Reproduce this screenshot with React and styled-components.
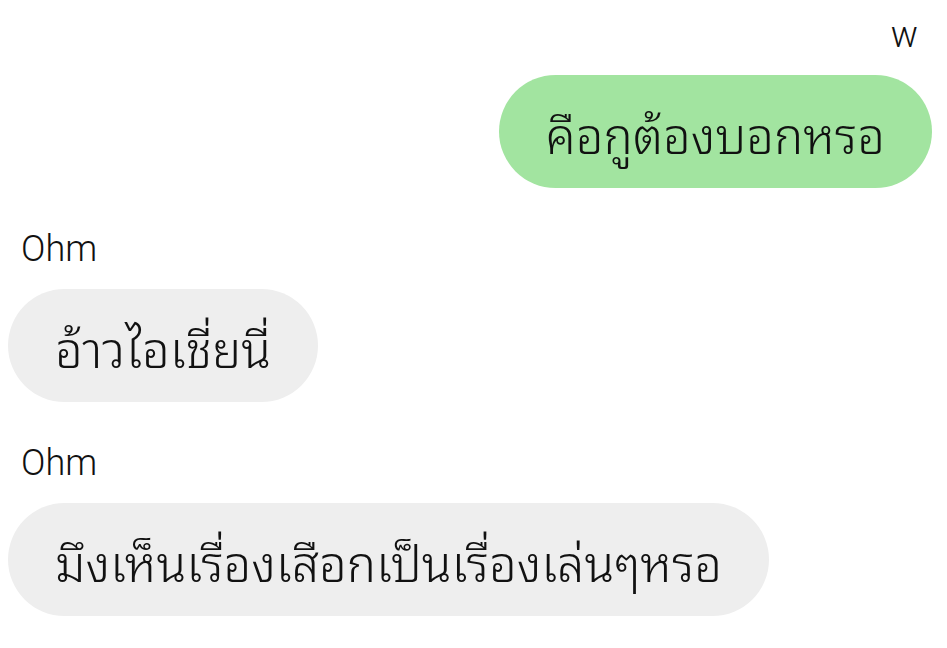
import React from 'react';
import styled, { createGlobalStyle } from 'styled-components';

const GlobalStyle = createGlobalStyle`
  html, body {
    margin: 0;
    padding: 0;
    background: #ffffff;
  }
  body {
    font-family: Roboto, "Noto Sans", sans-serif;
    color: #111111;
  }
`;

const Thread = styled.div`
  display: flex;
  flex-direction: column;
  padding: 15px 15px 0 8px;
  width: 947px;
  box-sizing: border-box;
`;

const Group = styled.div`
  display: flex;
  flex-direction: column;
  align-items: ${(p) => (p.$mine ? 'flex-end' : 'flex-start')};
  margin-bottom: 41px;
`;

const Sender = styled.div`
  font-size: 36px;
  font-weight: 300;
  line-height: 40px;
  margin: 0 ${(p) => (p.$mine ? '14px' : '0')} 20px ${(p) => (p.$mine ? '0' : '13px')};
`;

const Bubble = styled.div`
  height: 113px;
  box-sizing: border-box;
  display: flex;
  align-items: center;
  padding: 0 47px;
  border-radius: 57px;
  background: ${(p) => (p.$mine ? '#a2e4a0' : '#eeeeee')};
  font-family: "Noto Sans Thai Looped", "Noto Sans Thai", sans-serif;
  font-size: 49px;
  font-weight: 340;
  color: #111111;
  white-space: nowrap;
`;

const messages = [
  { id: 1, from: 'w', mine: true, text: 'คือกูต้องบอกหรอ' },
  { id: 2, from: 'Ohm', mine: false, text: 'อ้าวไอเชี่ยนี่' },
  { id: 3, from: 'Ohm', mine: false, text: 'มึงเห็นเรื่องเสือกเป็นเรื่องเล่นๆหรอ' },
];

export default function App() {
  return (
    <>
      <GlobalStyle />
      <Thread>
        {messages.map((m) => (
          <Group key={m.id} $mine={m.mine}>
            <Sender $mine={m.mine}>{m.from}</Sender>
            <Bubble $mine={m.mine}>{m.text}</Bubble>
          </Group>
        ))}
      </Thread>
    </>
  );
}
